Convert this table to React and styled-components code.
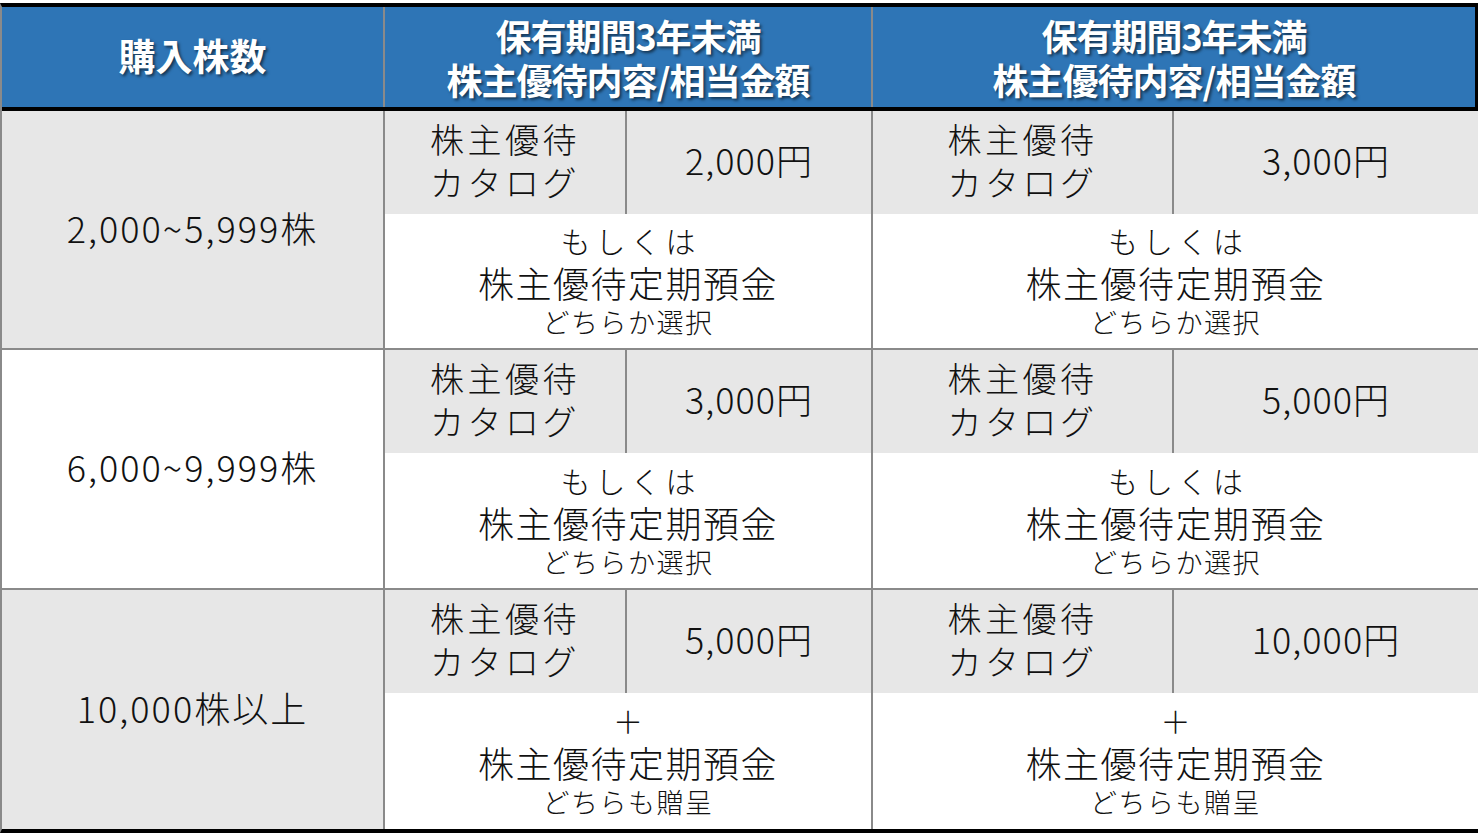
import React from "react";
import styled, { createGlobalStyle } from "styled-components";

const GlobalStyle = createGlobalStyle`
  html, body {
    margin: 0;
    padding: 0;
    background: #ffffff;
  }
  body {
    font-family: "Noto Sans CJK JP", "Noto Sans", sans-serif;
    color: #111111;
  }
`;

const LINE = "#8a8a8a";
const GRAY = "#e7e7e7";

const Table = styled.div`
  margin-top: 3px;
  width: 1478px;
  border-top: 4px solid #000;
  border-bottom: 4px solid #000;
  border-left: 2px solid ${LINE};
  box-sizing: border-box;
`;

const Row = styled.div`
  display: grid;
  grid-template-columns: 383px 488px 1fr;
  height: ${(p) => p.$h}px;
  border-bottom: ${(p) => p.$line || `2px solid ${LINE}`};
  box-sizing: border-box;
`;

const HeadCell = styled.div`
  background: #2e75b6;
  color: #ffffff;
  font-weight: 700;
  font-size: ${(p) => (p.$big ? 37 : 36)}px;
  line-height: 44px;
  letter-spacing: ${(p) => (p.$big ? "0" : "-1px")};
  text-align: center;
  display: flex;
  flex-direction: column;
  align-items: center;
  justify-content: center;
  text-shadow: 2px 2px 3px rgba(0, 0, 0, 0.55);
  border-right: ${(p) => (p.$last ? "3px solid #000" : `2px solid ${LINE}`)};
  padding-bottom: ${(p) => (p.$big ? "5px" : "0")};
`;

const LabelCell = styled.div`
  background: ${(p) => (p.$shade ? GRAY : "#ffffff")};
  border-right: 2px solid ${LINE};
  display: flex;
  align-items: center;
  justify-content: center;
  font-size: 36px;
  font-weight: 300;
  letter-spacing: 2px;
  padding-bottom: 6px;
`;

const Benefit = styled.div`
  display: flex;
  flex-direction: column;
  border-right: ${(p) => (p.$last ? "none" : `2px solid ${LINE}`)};
`;

const Catalog = styled.div`
  display: grid;
  grid-template-columns: ${(p) => p.$split}px 1fr;
  height: 103px;
  background: ${GRAY};
  flex-shrink: 0;
`;

const CatalogName = styled.div`
  border-right: 2px solid ${LINE};
  display: flex;
  flex-direction: column;
  align-items: center;
  justify-content: center;
  font-size: 34px;
  font-weight: 300;
  line-height: 43px;
  letter-spacing: 3.5px;
  padding-bottom: 6px;
`;

const Amount = styled.div`
  display: flex;
  align-items: center;
  justify-content: center;
  font-size: 36px;
  font-weight: 300;
  letter-spacing: 1px;
  padding-bottom: 8px;
`;

const Deposit = styled.div`
  flex: 1;
  background: #ffffff;
  display: flex;
  flex-direction: column;
  align-items: center;
  justify-content: center;
  padding-bottom: 2px;
`;

const Connector = styled.div`
  font-size: 30px;
  font-weight: 300;
  line-height: 40px;
  letter-spacing: 5px;
  margin-right: -5px;
`;

const DepositName = styled.div`
  font-size: 36px;
  font-weight: 300;
  line-height: 44px;
  letter-spacing: 1.5px;
`;

const Note = styled.div`
  font-size: 27px;
  font-weight: 300;
  line-height: 36px;
  letter-spacing: 1.5px;
`;

const rows = [
  {
    label: "2,000~5,999株",
    shade: true,
    a: "2,000円",
    b: "3,000円",
    conn: "もしくは",
    note: "どちらか選択",
  },
  {
    label: "6,000~9,999株",
    shade: false,
    a: "3,000円",
    b: "5,000円",
    conn: "もしくは",
    note: "どちらか選択",
  },
  {
    label: "10,000株以上",
    shade: true,
    a: "5,000円",
    b: "10,000円",
    conn: "＋",
    note: "どちらも贈呈",
  },
];

function BenefitBlock({ amount, conn, note, split, last }) {
  return (
    <Benefit $last={last}>
      <Catalog $split={split}>
        <CatalogName>
          <span>株主優待</span>
          <span>カタログ</span>
        </CatalogName>
        <Amount>{amount}</Amount>
      </Catalog>
      <Deposit>
        <Connector>{conn}</Connector>
        <DepositName>株主優待定期預金</DepositName>
        <Note>{note}</Note>
      </Deposit>
    </Benefit>
  );
}

export default function App() {
  return (
    <>
      <GlobalStyle />
      <Table>
        <Row $h={104} $line="4px solid #000">
          <HeadCell $big>購入株数</HeadCell>
          <HeadCell>
            <span>保有期間3年未満</span>
            <span>株主優待内容/相当金額</span>
          </HeadCell>
          <HeadCell $last>
            <span>保有期間3年未満</span>
            <span>株主優待内容/相当金額</span>
          </HeadCell>
        </Row>
        {rows.map((r, i) => (
          <Row key={r.label} $h={i === 1 ? 240 : 239} $line={i === 2 ? "none" : undefined}>
            <LabelCell $shade={r.shade}>{r.label}</LabelCell>
            <BenefitBlock amount={r.a} conn={r.conn} note={r.note} split={242} />
            <BenefitBlock amount={r.b} conn={r.conn} note={r.note} split={301} last />
          </Row>
        ))}
      </Table>
    </>
  );
}
